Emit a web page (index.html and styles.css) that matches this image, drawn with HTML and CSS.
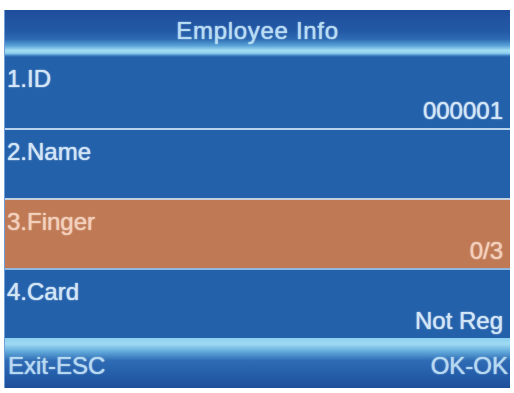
FILE: index.html
```html
<!DOCTYPE html>
<html>
<head>
<meta charset="utf-8">
<link rel="stylesheet" href="styles.css">
</head>
<body>
<div class="screen">
  <div class="title">Employee Info</div>
  <div class="list">
    <div class="row">
      <div class="label">1.ID</div>
      <div class="value">000001</div>
    </div>
    <div class="row">
      <div class="label">2.Name</div>
      <div class="value"></div>
    </div>
    <div class="row selected">
      <div class="label">3.Finger</div>
      <div class="value">0/3</div>
    </div>
    <div class="row">
      <div class="label">4.Card</div>
      <div class="value">Not Reg</div>
    </div>
  </div>
  <div class="footer">
    <span>Exit-ESC</span>
    <span>OK-OK</span>
  </div>
</div>
</body>
</html>
```

FILE: styles.css
```css
html, body {
  margin: 0;
  padding: 0;
  background: #ffffff;
}

body {
  width: 514px;
  height: 393px;
  overflow: hidden;
  font-family: "Liberation Sans", Arial, sans-serif;
}

.screen {
  margin: 10px 4px 0 5px;
  width: 505px;
  height: 378px;
  display: flex;
  flex-direction: column;
  background: #2461ab;
  box-shadow: -1px 0 0 #6f9fd6;
}

.title {
  height: 47px;
  box-sizing: border-box;
  padding-top: 7px;
  text-align: center;
  font-size: 24px;
  line-height: 28px;
  letter-spacing: 0.7px;
  color: #b9ddf4;
  text-shadow: 0 0 1px rgba(185, 221, 244, 0.9), 0 0 2px rgba(185, 221, 244, 0.5);
  background: linear-gradient(to bottom,
    #1f4e9b 0%,
    #2359a6 45%,
    #2d6ab2 62%,
    #5aa3d8 76%,
    #a3def4 86%,
    #8dd0ef 92%,
    #3f80c4 97%,
    #2762ad 100%);
}

.list {
  display: flex;
  flex-direction: column;
}

.row {
  height: 70px;
  box-sizing: border-box;
  display: flex;
  flex-direction: column;
  justify-content: space-between;
  padding: 8px 7px 4px 2px;
  background: #2461ab;
  color: #d3e6f7;
  font-size: 24px;
  line-height: 27px;
  text-shadow: 0 0 1px rgba(211, 230, 247, 0.9), 0 0 2px rgba(211, 230, 247, 0.5);
}

.row + .row {
  border-top: 2px solid #b9d3ec;
}

.row:first-child {
  height: 71px;
}

.row.selected {
  background: #bf7a55;
  color: #f3d0bc;
  text-shadow: 0 0 1px rgba(243, 208, 188, 0.9), 0 0 2px rgba(243, 208, 188, 0.5);
  border-top-color: #c6cfdc;
}

.row.selected + .row {
  border-top-color: #8fb8e0;
}

.label {
  height: 27px;
}

.value {
  height: 27px;
  text-align: right;
}

.footer {
  flex: 1;
  display: flex;
  justify-content: space-between;
  align-items: center;
  box-sizing: border-box;
  padding: 6px 2px 0 3px;
  font-size: 24px;
  line-height: 28px;
  color: #b7d9f2;
  text-shadow: 0 0 1px rgba(183, 217, 242, 0.9), 0 0 2px rgba(183, 217, 242, 0.5);
  background: linear-gradient(to bottom,
    #8ed0ef 0%,
    #9edaf3 12%,
    #5ea6da 28%,
    #2f6cb4 45%,
    #255fab 70%,
    #1d4e9a 100%);
}
```
